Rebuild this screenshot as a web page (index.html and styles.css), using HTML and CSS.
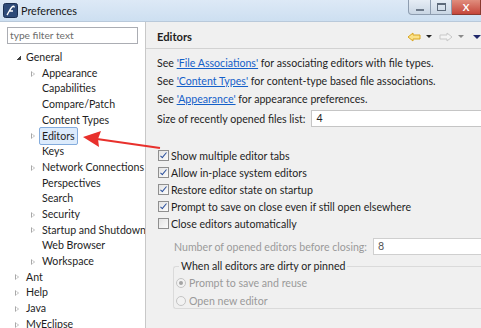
FILE: index.html
```html
<!DOCTYPE html>
<html lang="en">
<head>
<meta charset="UTF-8">
<title>Preferences</title>
<link rel="stylesheet" href="styles.css">
</head>
<body>
<div class="window">
    <div class="titlebar">
        <svg class="app-icon" width="15" height="15" viewBox="0 0 15 15">
            <rect x="0.5" y="0.5" width="14" height="14" rx="2" fill="#2d4a78" stroke="#1b2f52"/>
            <path d="M4 12 C6 9, 7 6, 9 4 C10 3, 11.5 3, 11 4.5 M6 8 L10 8" stroke="#fff" stroke-width="1.4" fill="none"/>
        </svg>
        <span class="title">Preferences</span>
        <div class="win-buttons">
            <div class="win-btn btn-min"><span class="min-bar"></span></div>
            <div class="win-btn btn-max"><span class="max-box"></span></div>
            <div class="win-btn btn-close">X</div>
        </div>
    </div>

    <div class="main">
        <div class="sidebar">
            <div class="filter">type filter text</div>
            <ul class="tree">
                <li class="lvl0"><span class="exp open"></span>General</li>
                <li class="lvl1"><span class="exp"></span>Appearance</li>
                <li class="lvl1"><span class="exp none"></span>Capabilities</li>
                <li class="lvl1"><span class="exp none"></span>Compare/Patch</li>
                <li class="lvl1"><span class="exp none"></span>Content Types</li>
                <li class="lvl1"><span class="exp"></span><span class="selected">Editors</span></li>
                <li class="lvl1"><span class="exp none"></span>Keys</li>
                <li class="lvl1"><span class="exp"></span>Network Connections</li>
                <li class="lvl1"><span class="exp none"></span>Perspectives</li>
                <li class="lvl1"><span class="exp none"></span>Search</li>
                <li class="lvl1"><span class="exp"></span>Security</li>
                <li class="lvl1"><span class="exp"></span>Startup and Shutdown</li>
                <li class="lvl1"><span class="exp none"></span>Web Browser</li>
                <li class="lvl1"><span class="exp"></span>Workspace</li>
                <li class="lvl0"><span class="exp"></span>Ant</li>
                <li class="lvl0"><span class="exp"></span>Help</li>
                <li class="lvl0"><span class="exp"></span>Java</li>
                <li class="lvl0"><span class="exp"></span>MyEclipse</li>
            </ul>
        </div>

        <div class="content">
            <div class="page-header">
                <span class="page-title">Editors</span>
                <div class="nav">
                    <svg width="14" height="10" viewBox="0 0 14 10">
                        <path d="M1 5 L6 1 L6 3 L13 3 L13 7 L6 7 L6 9 Z" fill="#fbe28a" stroke="#d9a520" stroke-width="1"/>
                    </svg>
                    <span class="drop dark"></span>
                    <svg width="14" height="10" viewBox="0 0 14 10">
                        <path d="M13 5 L8 1 L8 3 L1 3 L1 7 L8 7 L8 9 Z" fill="#f4f4f4" stroke="#c8c8c8" stroke-width="1"/>
                    </svg>
                    <span class="drop light"></span>
                    <span class="drop navy"></span>
                </div>
            </div>

            <div class="page-body">
                <p class="line">See <a>'File Associations'</a> for associating editors with file types.</p>
                <p class="line">See <a>'Content Types'</a> for content-type based file associations.</p>
                <p class="line">See <a>'Appearance'</a> for appearance preferences.</p>
                <div class="field-row">
                    <span>Size of recently opened files list:</span>
                    <span class="input">4</span>
                </div>

                <ul class="checks">
                    <li><span class="check on"></span>Show multiple editor tabs</li>
                    <li><span class="check on"></span>Allow in-place system editors</li>
                    <li><span class="check on"></span>Restore editor state on startup</li>
                    <li><span class="check on"></span>Prompt to save on close even if still open elsewhere</li>
                    <li><span class="check"></span>Close editors automatically</li>
                </ul>

                <div class="field-row disabled indent">
                    <span>Number of opened editors before closing:</span>
                    <span class="input">8</span>
                </div>

                <fieldset class="group">
                    <legend>When all editors are dirty or pinned</legend>
                    <div class="radio-row"><span class="radio on"></span>Prompt to save and reuse</div>
                    <div class="radio-row"><span class="radio"></span>Open new editor</div>
                </fieldset>
            </div>
        </div>
    </div>

    <svg class="pointer" width="84" height="28" viewBox="0 0 84 28">
        <path d="M81 24 L18 15" stroke="#e8302c" stroke-width="2.2" fill="none"/>
        <path d="M4 13 L22 7 L19 15 L20 23 Z" fill="#e8302c"/>
    </svg>
</div>
</body>
</html>
```

FILE: styles.css
```css
html, body {
    margin: 0;
    padding: 0;
}

body {
    width: 481px;
    height: 328px;
    overflow: hidden;
    font-family: Lato, "Noto Sans", sans-serif;
    font-size: 10.6px;
    color: #1e1e1e;
}

.window {
    position: relative;
    height: 328px;
    display: flex;
    flex-direction: column;
    background: #f0f0f0;
    overflow: hidden;
}

/* title bar */
.titlebar {
    flex-shrink: 0;
    height: 22px;
    display: flex;
    align-items: center;
    background: linear-gradient(#dde9f6, #cddff1);
    border-bottom: 1px solid #b9c9da;
    box-sizing: border-box;
}

.app-icon {
    margin-left: 3px;
}

.title {
    margin-left: 3px;
    font-size: 10.8px;
    color: #1a1a1a;
}

.win-buttons {
    margin-left: auto;
    align-self: flex-start;
    display: flex;
    height: 15px;
}

.win-btn {
    height: 15px;
    box-sizing: border-box;
    border: 1px solid #8e9db0;
    border-top: none;
    display: flex;
    align-items: center;
    justify-content: center;
}

.btn-min {
    width: 23px;
    border-radius: 0 0 0 4px;
    background: linear-gradient(#e6edf5, #c9d6e4);
}

.btn-max {
    width: 21px;
    border-left: none;
    background: linear-gradient(#e6edf5, #c9d6e4);
}

.btn-close {
    width: 29px;
    border-left: none;
    border-color: #8a3a30;
    background: linear-gradient(#e08d7d, #c5463a);
    color: #fff;
    font-size: 10px;
    font-weight: bold;
}

.min-bar {
    width: 8px;
    height: 2px;
    margin-top: 5px;
    background: #6d7a8a;
}

.max-box {
    width: 7px;
    height: 5px;
    border: 1px solid #5d6a7a;
    border-top-width: 2px;
}

/* layout */
.main {
    flex: 1;
    min-height: 0;
    display: flex;
    overflow: hidden;
}

.sidebar {
    width: 146px;
    background: #fff;
    border-right: 1px solid #c8c8c8;
    padding: 5px 0 0 7px;
    box-sizing: border-box;
    overflow: hidden;
}

.filter {
    width: 131px;
    height: 17px;
    box-sizing: border-box;
    border: 1px solid #abadb3;
    padding-left: 2px;
    line-height: 15px;
    color: #6d6d6d;
    font-size: 10.2px;
}

.tree {
    list-style: none;
    margin: 6px 0 0;
    padding: 0;
}

.tree li {
    height: 15.7px;
    line-height: 15.7px;
    display: flex;
    align-items: center;
    white-space: nowrap;
}

.tree .lvl0 {
    padding-left: 8px;
}

.tree .lvl1 {
    padding-left: 24px;
}

.exp {
    width: 0;
    height: 0;
    border-top: 3.5px solid transparent;
    border-bottom: 3.5px solid transparent;
    border-left: 4px solid #a8a8a8;
    margin-right: 7px;
    position: relative;
}

.exp::after {
    content: "";
    position: absolute;
    left: -3px;
    top: -2px;
    border-top: 2px solid transparent;
    border-bottom: 2px solid transparent;
    border-left: 2px solid #fff;
}

.exp.none {
    visibility: hidden;
}

.exp.open {
    border: none;
    width: 5px;
    height: 5px;
    background: linear-gradient(135deg, transparent 50%, #404040 50%);
    margin-right: 5px;
    margin-left: 1px;
}

.exp.open::after {
    display: none;
}

.selected {
    margin-left: -3px;
    padding: 0 2px;
    height: 16px;
    line-height: 16px;
    background: #dcebfc;
    border: 1px solid #84acdd;
    border-radius: 2px;
}

/* page */
.content {
    flex: 1;
    min-width: 0;
}

.page-header {
    height: 27px;
    box-sizing: border-box;
    padding: 3px 0 0 11px;
    display: flex;
    align-items: center;
    border-bottom: 1px solid #d2d2d2;
}

.page-title {
    font-weight: bold;
    font-size: 11.2px;
}

.nav {
    margin-left: auto;
    display: flex;
    align-items: center;
    gap: 3px;
}

.drop {
    width: 0;
    height: 0;
    border-left: 3px solid transparent;
    border-right: 3px solid transparent;
    border-top: 3px solid #222;
    margin: 0 4px 0 2px;
}

.drop.light {
    border-top-color: #8a8a8a;
}

.drop.navy {
    border-left-width: 4px;
    border-right-width: 4px;
    border-top-width: 4px;
    border-top-color: #20286a;
    margin-right: 0;
}

.page-body {
    padding: 6px 0 0 11px;
}

.line {
    margin: 0;
    height: 17.8px;
    line-height: 17.8px;
}

.line a {
    color: #1560c9;
    text-decoration: underline;
}

.field-row {
    display: flex;
    align-items: center;
    margin-top: 2px;
    height: 17px;
    white-space: nowrap;
}

.input {
    margin-left: 6px;
    flex: 1;
    height: 17px;
    box-sizing: border-box;
    background: #fff;
    border: 1px solid #c5c5c5;
    border-right: none;
    padding-left: 4px;
    line-height: 15px;
    color: #1e1e1e;
}

.checks {
    list-style: none;
    margin: 20px 0 0;
    padding: 0;
}

.checks li {
    height: 17px;
    display: flex;
    align-items: center;
    white-space: nowrap;
}

.check {
    width: 11px;
    height: 11px;
    box-sizing: border-box;
    border: 1px solid #8f8f8f;
    background: linear-gradient(135deg, #e4e4e4, #fbfbfb);
    margin: 0 2px 0 1px;
    position: relative;
}

.check.on::after {
    content: "";
    position: absolute;
    left: 3px;
    top: 0;
    width: 2px;
    height: 6px;
    border: solid #2a4f9c;
    border-width: 0 1.5px 1.5px 0;
    transform: rotate(40deg);
}

.disabled {
    color: #9a9a9a;
}

.indent {
    margin-top: 6px;
    margin-left: 17px;
}

.disabled .input {
    color: #555;
    border-color: #cfcfcf;
}

.group {
    margin: 4px 0 0 16px;
    padding: 0 0 4px 2px;
    border: 1px solid #dadada;
    border-right: none;
    border-radius: 3px 0 0 3px;
    height: 44px;
}

.group legend {
    padding: 0 2px;
    margin-left: 3px;
    color: #1e1e1e;
    line-height: 14px;
}

.radio-row {
    height: 18.5px;
    display: flex;
    align-items: center;
    color: #9a9a9a;
}

.radio {
    width: 10px;
    height: 10px;
    box-sizing: border-box;
    border-radius: 50%;
    border: 1px solid #c4c4c4;
    background: #f2f2f2;
    margin-right: 3px;
    position: relative;
}

.radio.on::after {
    content: "";
    position: absolute;
    left: 2px;
    top: 2px;
    width: 4px;
    height: 4px;
    border-radius: 50%;
    background: #a4a4a4;
}

/* red pointer over the tree */
.pointer {
    position: absolute;
    left: 79px;
    top: 124px;
}
```
